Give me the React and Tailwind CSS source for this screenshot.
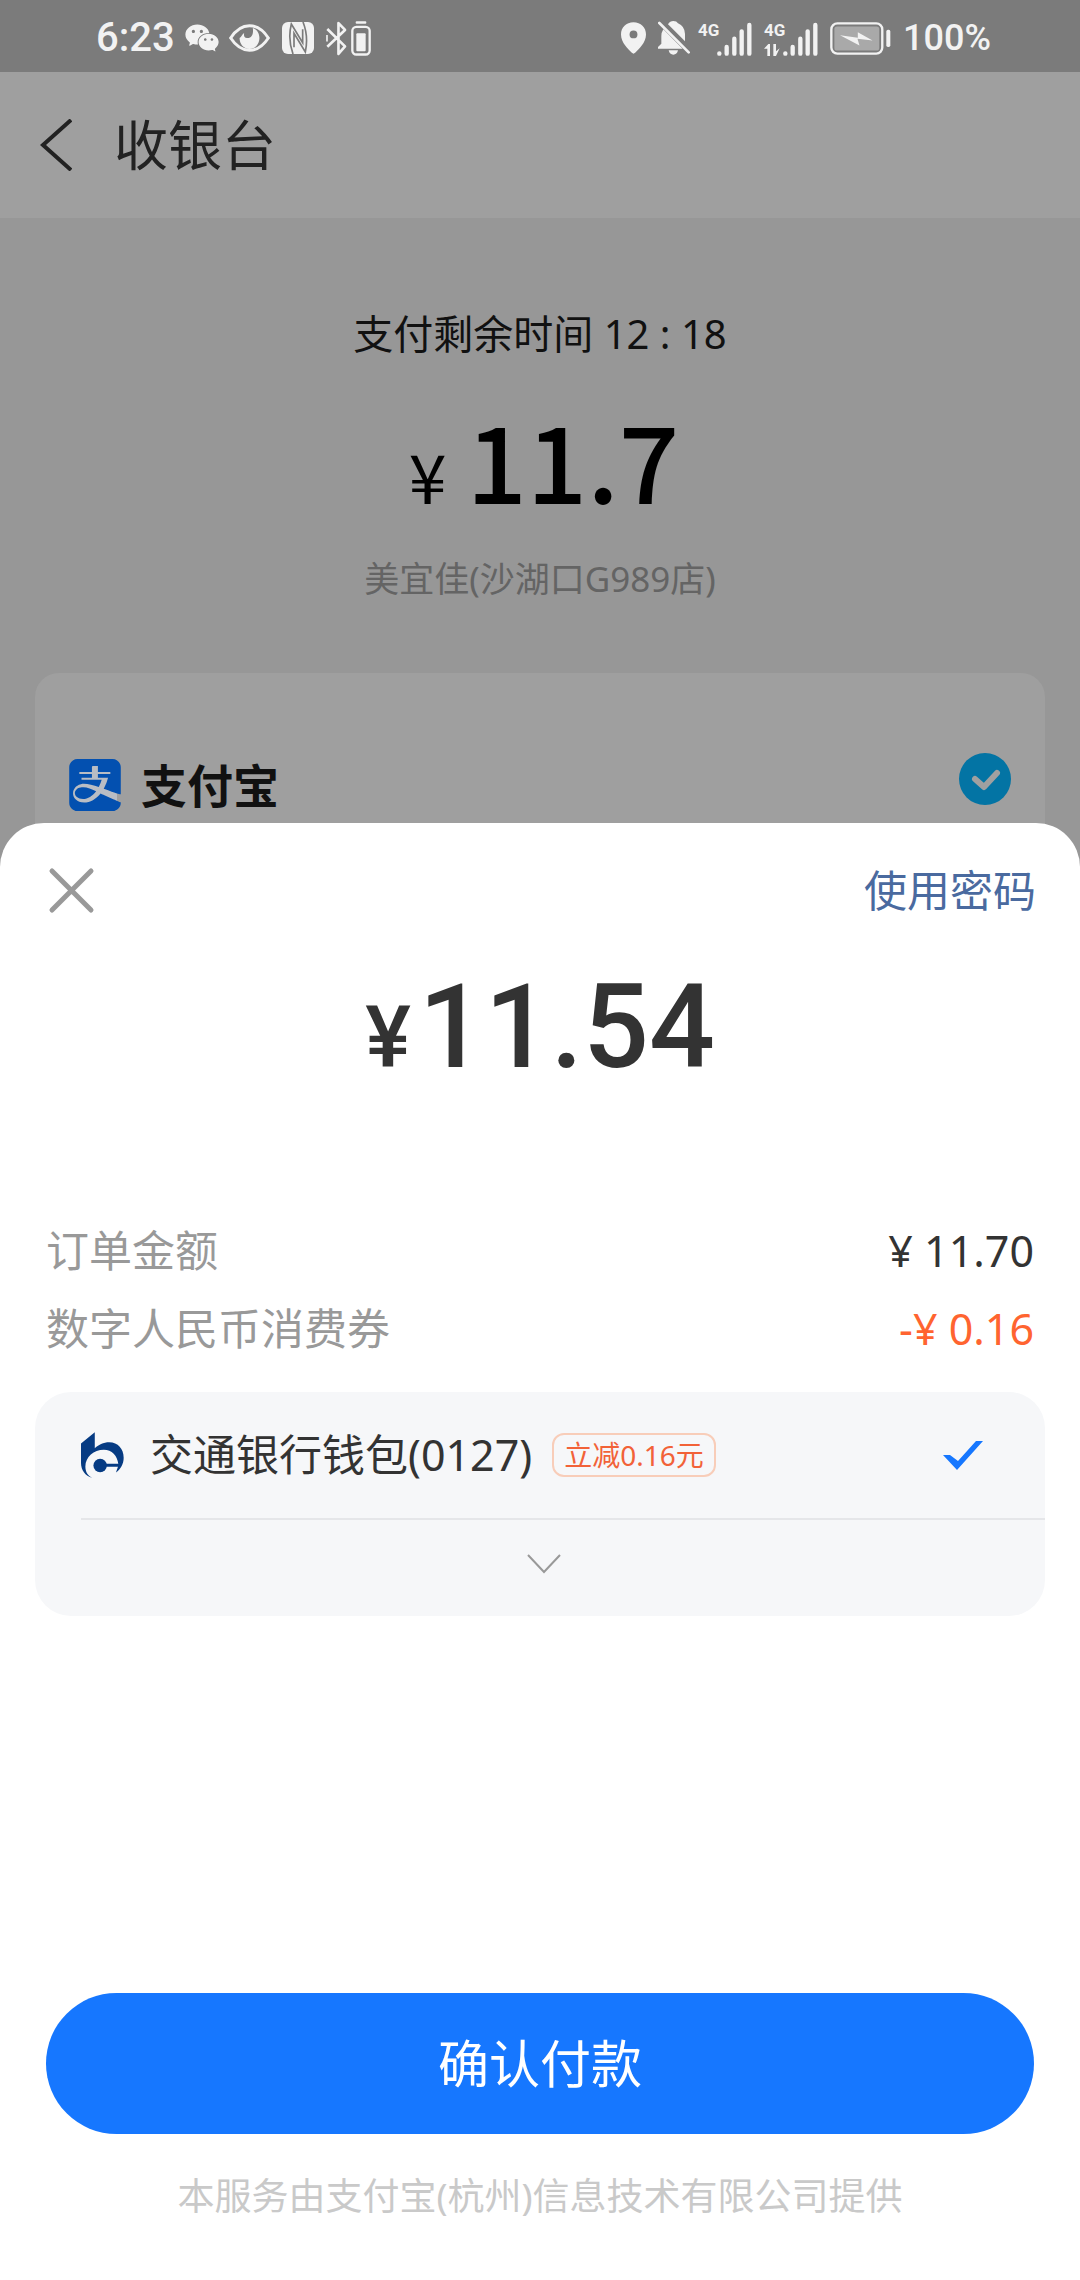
import { useState } from 'react';
import { AiFillWechat } from 'react-icons/ai';
import { SiAlipay } from 'react-icons/si';

const orderRows = [
    { label: '订单金额', value: '¥ 11.70', color: 'text-[#333333]' },
    { label: '数字人民币消费券', value: '-¥ 0.16', color: 'text-[#ff6430]' },
];

/* ---------- Status bar icons ---------- */

const EyeIcon = () => (
    <svg viewBox="0 0 124 84" className="h-7 w-[41px]">
        <path d="M5 42C22 16 42 5 62 5s40 11 57 37C102 68 82 79 62 79S22 68 5 42Z" fill="none" stroke="currentColor" strokeWidth="9" />
        <path d="M32 42c0 18 12 33 30 33s30-15 30-33c0-14-8-26-20-30 3 18-4 32-18 30-8-1-10-8-8-15-6 3-8 13-14 15Z" fill="currentColor" />
    </svg>
);

const NfcIcon = () => (
    <svg viewBox="0 0 96 96" className="size-8">
        <rect width="96" height="96" rx="18" fill="currentColor" />
        <g fill="none" stroke="#7b7b7b" strokeWidth="5">
            <path d="M33 96C22 66 22 30 28 6l34 56V22" />
            <path d="M63 0c12 30 12 66 7 90L36 34v42" />
        </g>
    </svg>
);

const BluetoothIcon = () => (
    <svg viewBox="0 0 64 106" className="h-[35px] w-[21px]" fill="none" stroke="currentColor" strokeWidth="8" strokeLinejoin="round">
        <path d="M4 24l54 53-20 23V6l20 21L4 78" />
        <path d="M3 42v20" strokeWidth="5" />
    </svg>
);

const DeviceBatteryIcon = () => (
    <svg viewBox="0 0 60 104" className="h-[35px] w-5">
        <rect x="14" width="32" height="8" rx="3" fill="currentColor" />
        <rect x="4" y="17" width="52" height="83" rx="12" fill="none" stroke="currentColor" strokeWidth="7" />
        <rect x="16" y="36" width="28" height="54" rx="3" fill="currentColor" />
    </svg>
);

const LocationIcon = () => (
    <svg viewBox="0 0 76 96" className="h-8 w-[25px]">
        <path fillRule="evenodd" fill="currentColor" d="M38 0C16 0 0 16 0 37c0 25 22 44 33 56q5 5 10 0c11-12 33-31 33-56C76 16 60 0 38 0Zm0 25a12 12 0 1 1 0 24 12 12 0 0 1 0-24Z" />
    </svg>
);

const BellOffIcon = () => (
    <svg viewBox="0 0 96 102" className="h-[34px] w-8">
        <path d="M16 25 74 83H0v-5l10-10V46q0-12 6-21ZM30 10Q36 0 46 0t14 7q20 8 21 32v22L30 10ZM32 88h28q-3 13-14 13T32 88Z" fill="currentColor" />
        <path d="M4 6l88 88" stroke="currentColor" strokeWidth="8" strokeLinecap="round" />
    </svg>
);

const Signal = ({ data }) => (
    <div className="flex items-end">
        <div className="flex h-9 w-[19px] flex-col justify-between">
            <span className="font-['Roboto',sans-serif] text-[17px] leading-5 font-bold">4G</span>
            {data && (
                <svg viewBox="0 0 48 36" className="h-3 w-4" fill="currentColor">
                    <path d="M0 14 13 0h5v36h-8V14ZM28 0h8v22l11-9-11 23h-8Z" />
                </svg>
            )}
        </div>
        <svg viewBox="0 0 105 102" className="h-[34px] w-[35px]">
            <path
                d="M7 94v1M29 75v20M52 50v45M74 28v67M97 9v86"
                stroke="currentColor"
                strokeWidth="13"
                strokeLinecap="round"
            />
        </svg>
    </div>
);

const BatteryIcon = () => (
    <svg viewBox="0 0 182 98" className="h-[33px] w-[61px]">
        <rect x="4" y="4" width="152" height="90" rx="18" fill="none" stroke="currentColor" strokeWidth="7" />
        <rect x="13" y="13" width="134" height="72" rx="8" fill="#a9a9a9" />
        <rect x="168" y="23" width="12" height="51" rx="5" fill="currentColor" />
        <path d="M30 39l53 8V30l44 25-45-5 6 20Z" fill="currentColor" />
    </svg>
);

/* ---------- Page icons ---------- */

const BankLogo = () => (
    <svg viewBox="0 0 128 136" className="h-[46px] w-[43px] shrink-0" fill="#063b83">
        <path d="M0 34 41 0v48c10-10 26-18 43-18 26 0 43 20 43 46 0 18-9 34-23 44l6-17H72v-9h39c-3-24-19-42-43-42-30 0-55 22-55 50 0 16 7 28 21 34C12 131 0 112 0 92Z" />
        <circle cx="57" cy="99" r="20" />
    </svg>
);

const StatusBar = () => (
    <div className="flex h-18 items-center justify-between bg-[#7b7b7b] pt-1 pr-[89px] pl-24 text-[#f2f2f2]">
        <div className="flex items-center">
            <span className="mr-2 font-['Roboto',sans-serif] text-[40px] leading-10 font-medium">6:23</span>
            <AiFillWechat className="mr-2 size-[38px]" />
            <EyeIcon />
            <div className="mr-3 ml-3"><NfcIcon /></div>
            <BluetoothIcon />
            <div className="ml-1"><DeviceBatteryIcon /></div>
        </div>
        <div className="flex items-center">
            <LocationIcon />
            <div className="mr-2 ml-3"><BellOffIcon /></div>
            <Signal />
            <div className="mr-3 ml-3"><Signal data /></div>
            <BatteryIcon />
            <span className="ml-3 font-['Roboto',sans-serif] text-[36px] leading-10 font-medium">100%</span>
        </div>
    </div>
);

const Cashier = () => (
    <div>
        <header className="flex h-[146px] items-center bg-[#9f9f9f] pl-10">
            <button type="button" aria-label="返回" className="mr-[42px]">
                <svg viewBox="0 0 32 52" className="h-[52px] w-8" fill="none" stroke="#222222" strokeWidth="4">
                    <path d="M31 1 3 26l28 25" />
                </svg>
            </button>
            <h1 className="text-[54px] leading-16 text-[#222222]">收银台</h1>
        </header>

        <section className="flex flex-col items-center pt-[92px] pb-[70px]">
            <p className="text-[40px] leading-12 text-[#111111]">支付剩余时间 12 : 18</p>
            <p className="mt-10 flex items-baseline pl-2 font-['Noto_Sans_CJK_SC',sans-serif] leading-[120px] text-black">
                <span className="mr-5 text-[68px]">¥</span>
                <span className="text-[106px] font-medium">11.7</span>
            </p>
            <p className="mt-5 text-[35px] leading-12 text-[#646464]">美宜佳(沙湖口G989店)</p>
        </section>

        <label className="mx-[35px] flex items-start justify-between rounded-t-3xl bg-[#9f9f9f] px-[34px] pt-20 pb-[60px]">
            <span className="flex items-center">
                <span className="mr-5 rounded-lg bg-[linear-gradient(#b9bdc4,#b9bdc4)] bg-size-[44px_44px] bg-center bg-no-repeat">
                    <SiAlipay className="size-[52px] text-[#0350b0]" />
                </span>
                <span className="text-[46px] leading-16 font-bold text-[#111111]">支付宝</span>
            </span>
            <input type="radio" name="channel" defaultChecked className="sr-only" />
            <svg viewBox="0 0 52 52" className="size-[52px]">
                <circle cx="26" cy="26" r="26" fill="#0374a4" />
                <path d="M16 26l9 8 13-14" fill="none" stroke="#a0a0a0" strokeWidth="6" strokeLinecap="round" strokeLinejoin="round" />
            </svg>
        </label>
    </div>
);

const PaySheet = () => {
    const [expanded, setExpanded] = useState(false);

    return (
        <section className="relative -mt-[54px] flex grow flex-col rounded-t-[44px] bg-white pb-14">
            <div className="flex items-center justify-between pt-9 pr-11 pl-12">
                <button type="button" aria-label="关闭">
                    <svg viewBox="0 0 48 48" className="size-12" fill="none" stroke="#999999" strokeWidth="5" strokeLinecap="round">
                        <path d="M4 4l39 39M43 4 4 43" />
                    </svg>
                </button>
                <button type="button" className="text-[43px] leading-16 text-[#4a6a9f]">使用密码</button>
            </div>

            <p className="mt-11 flex items-baseline justify-center font-['Roboto',sans-serif] leading-[120px] font-medium text-[#333333]">
                <span className="mr-2 text-[86px]">¥</span>
                <span className="text-[116px]">11.54</span>
            </p>

            <dl className="mt-[114px] px-[46px] text-[43px]">
                {orderRows.map((row) => (
                    <div key={row.label} className="flex h-[78px] items-center justify-between">
                        <dt className="text-[#999999]">{row.label}</dt>
                        <dd className={row.color}>{row.value}</dd>
                    </div>
                ))}
            </dl>

            <div className="mx-[35px] mt-6 rounded-[36px] bg-[#f6f7f9]">
                <label className="ml-[46px] flex h-32 items-center border-b-2 border-[#e5e6e9]">
                    <BankLogo />
                    <span className="ml-[26px] text-[43px] text-[#333333]">交通银行钱包(0127)</span>
                    <span className="ml-5 flex h-11 items-center rounded-xl border-2 border-[#f8cdb9] px-[10px] text-[28px] text-[#f26238]">
                        立减0.16元
                    </span>
                    <input type="radio" name="wallet" defaultChecked className="sr-only" />
                    <svg viewBox="0 0 40 29" className="mr-[62px] ml-auto h-[29px] w-10" fill="#1677ff">
                        <path d="M0 14h7l8 6L33 0h7L14 29Z" />
                    </svg>
                </label>
                <button
                    type="button"
                    aria-label="更多支付方式"
                    aria-expanded={expanded}
                    onClick={() => setExpanded(!expanded)}
                    className="flex h-24 w-full items-center justify-center pb-2 pl-2"
                >
                    <svg viewBox="0 0 34 20" className="h-5 w-[34px]" fill="none" stroke="#999999" strokeWidth="2">
                        <path d="M1 1l16 17L33 1" />
                    </svg>
                </button>
            </div>

            <div className="mx-[46px] mt-auto flex flex-col">
                <button type="button" className="h-[141px] rounded-full bg-[#1677ff] text-[51px] text-white">
                    确认付款
                </button>
                <p className="mt-[34px] text-center text-[37px] leading-14 text-[#c9c9c9]">
                    本服务由支付宝(杭州)信息技术有限公司提供
                </p>
            </div>
        </section>
    );
};

export default function App() {
    return (
        <main className="flex min-h-screen flex-col bg-[#979797] font-['Noto_Sans','Noto_Sans_CJK_SC',sans-serif]">
            <StatusBar />
            <Cashier />
            <PaySheet />
        </main>
    );
}
